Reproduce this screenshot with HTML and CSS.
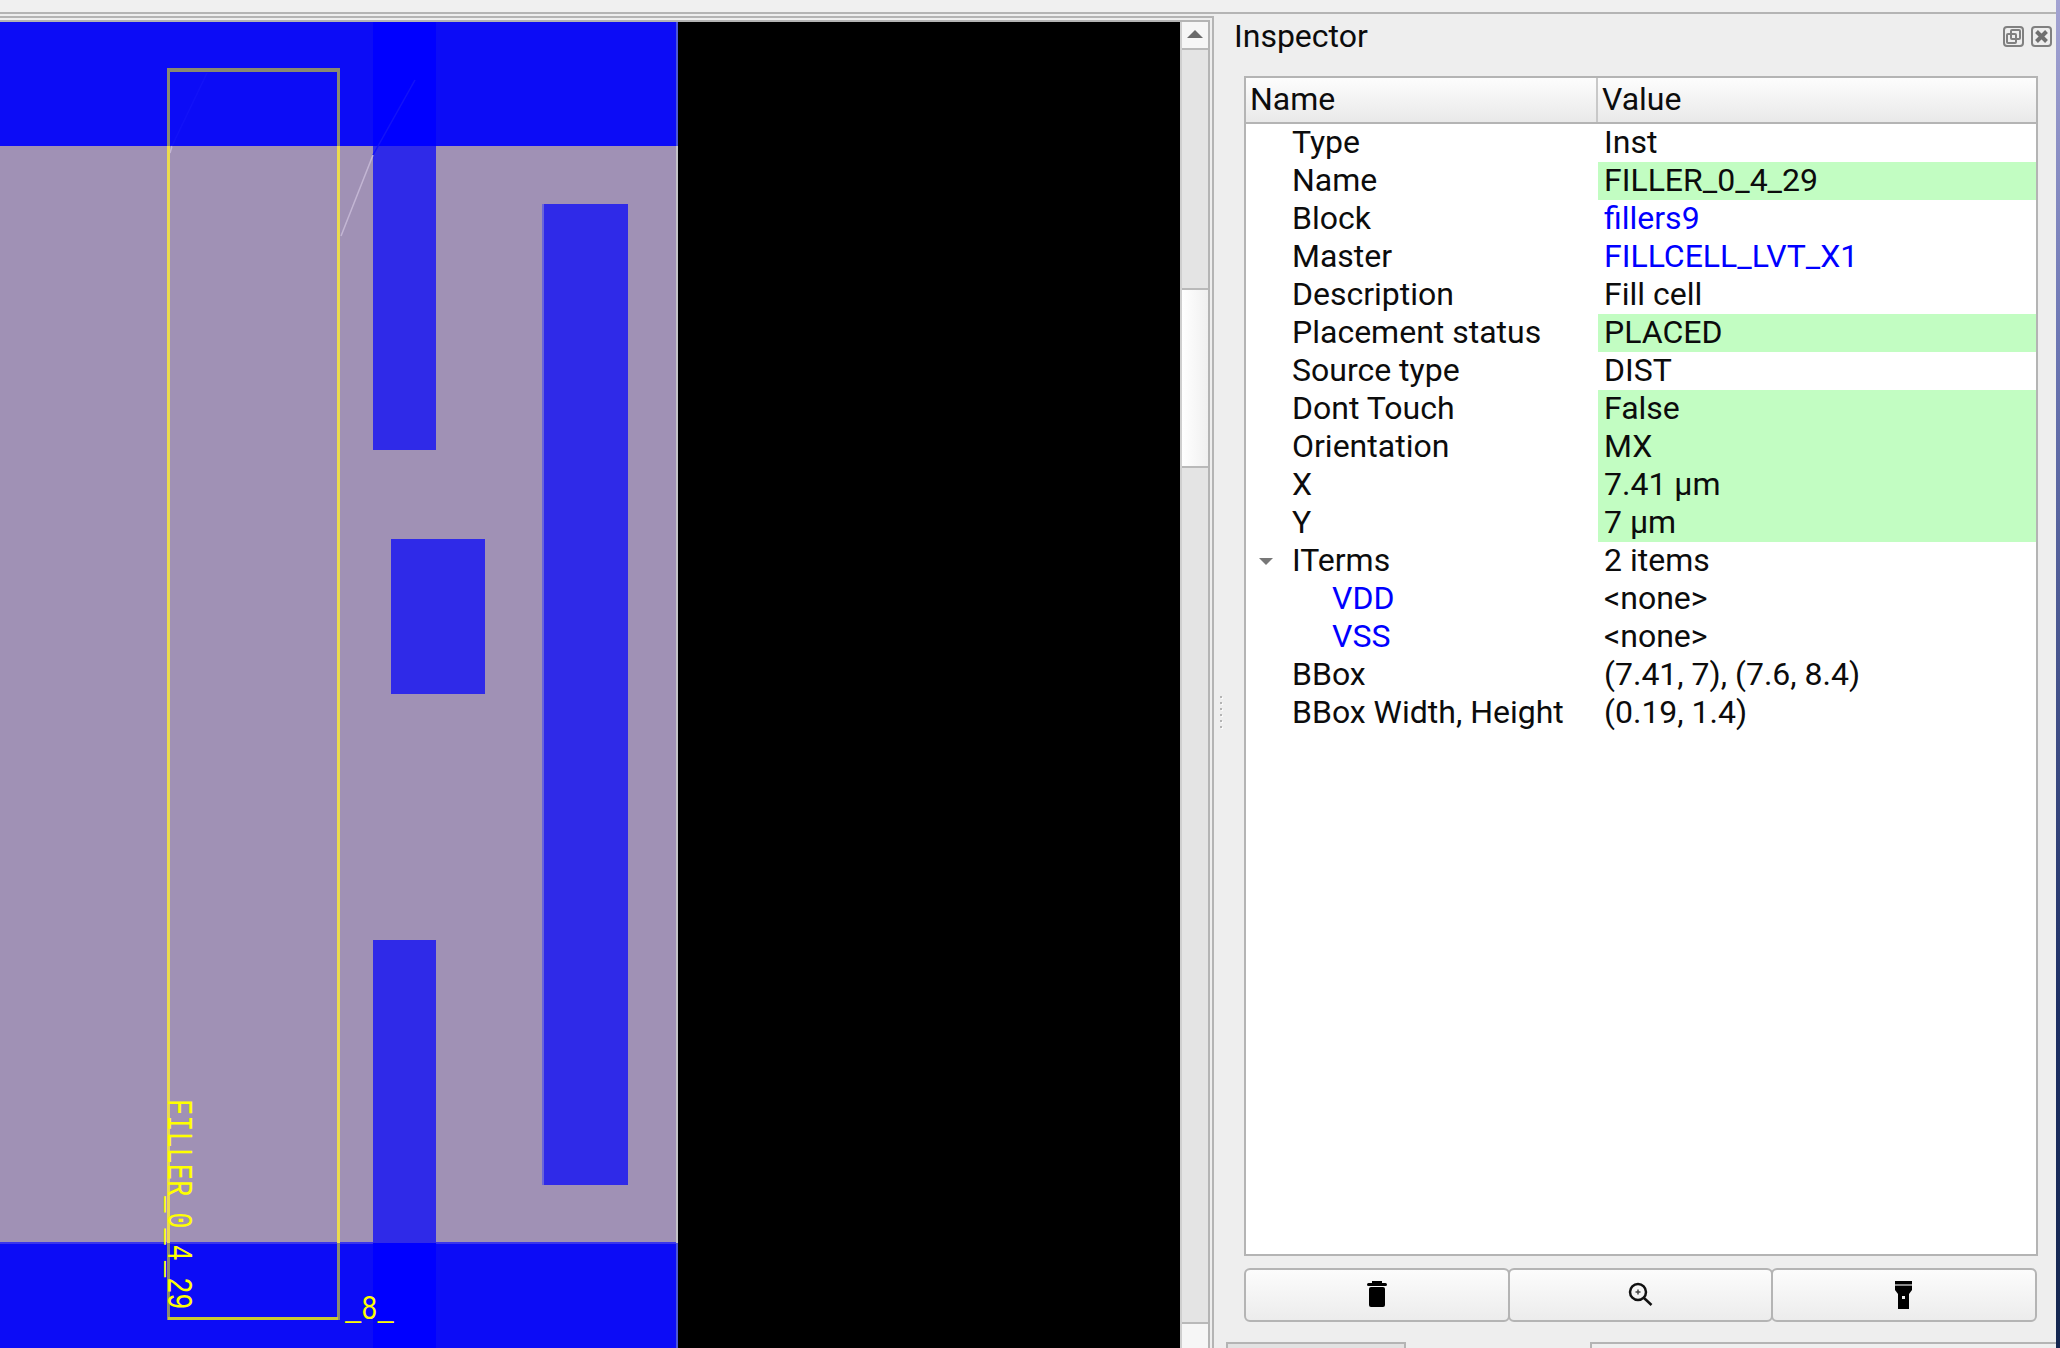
FILE: index.html
```html
<!DOCTYPE html>
<html lang="en">
<head>
    <meta charset="UTF-8">
    <title>Inspector</title>
    <link rel="stylesheet" href="styles.css">
</head>
<body>
    <div class="menu-strip"></div>
    <main class="main">
        <section class="central">
            <div class="view-frame">
                <svg class="layout-view" width="1180" height="1326" viewBox="0 22 1180 1326">
                    <rect class="die" x="0" y="22" width="1180" height="1326"/>
                    <rect class="cell" x="0" y="22" width="676" height="1326"/>
                    <rect class="cell-edge" x="676" y="146" width="2" height="1097"/>
                    <rect class="cell-edge-rail" x="676" y="22" width="2" height="124"/>
                    <rect class="cell-edge-rail" x="676" y="1243" width="2" height="105"/>

                    <rect class="rail" x="0" y="22" width="676" height="124"/>
                    <rect class="rail" x="0" y="1243" width="676" height="105"/>
                    <rect class="rail-seam" x="0" y="1242" width="676" height="2"/>

                    <rect class="pin" x="373" y="146" width="63" height="304"/>
                    <rect class="pin-rail" x="373" y="22" width="63" height="124"/>
                    <rect class="pin" x="373" y="940" width="63" height="303"/>
                    <rect class="pin-rail" x="373" y="1243" width="63" height="105"/>
                    <rect class="pin-edge" x="542" y="204" width="2" height="981"/>
                    <rect class="pin" x="544" y="204" width="84" height="981"/>
                    <rect class="pin" x="391" y="539" width="94" height="155"/>

                    <line class="fly" x1="341" y1="236" x2="373" y2="155"/>
                    <line class="fly-faint" x1="373" y1="155" x2="415" y2="80"/>
                    <line class="fly" x1="170" y1="153" x2="172" y2="146"/>
                    <line class="fly-faint" x1="172" y1="146" x2="207" y2="73"/>

                    <rect class="box-side" x="167" y="146" width="3" height="1097"/>
                    <rect class="box-side" x="337" y="146" width="3" height="1097"/>
                    <rect class="box-dim" x="167" y="70" width="3" height="76"/>
                    <rect class="box-dim" x="337" y="70" width="3" height="76"/>
                    <rect class="box-dim" x="167" y="1243" width="3" height="77"/>
                    <rect class="box-dim" x="337" y="1243" width="3" height="77"/>
                    <rect class="box-dim" x="167" y="68" width="173" height="4"/>
                    <rect class="box-bottom" x="168" y="1317" width="170" height="3"/>

                    <text class="cell-label" transform="translate(168 1099) rotate(90) scale(1 1.400)">FILLER_0_4_29</text>
                    <text class="cell-label" transform="translate(345 1319) scale(1 1.300)">_8_</text>
                </svg>
                <div class="scrollbar">
                    <div class="scroll-btn"><span class="arrow-up"></span></div>
                    <div class="scroll-trough upper"></div>
                    <div class="scroll-thumb"></div>
                    <div class="scroll-trough"></div>
                    <div class="scroll-btn end"></div>
                </div>
            </div>
        </section>

        <div class="splitter">
            <div class="grip">
                <i></i><i></i><i></i><i></i><i></i><i></i>
            </div>
        </div>

        <aside class="dock">
            <div class="dock-title">
                <span>Inspector</span>
                <div class="dock-buttons">
                    <svg width="21" height="21" viewBox="0 0 21 21">
                        <rect class="dock-icon" x="1" y="1" width="19" height="19" rx="3"/>
                        <rect class="dock-icon" x="8" y="4" width="9" height="9" rx="1"/>
                        <rect class="dock-icon" x="4" y="8" width="9" height="9" rx="1"/>
                    </svg>
                    <svg width="21" height="21" viewBox="0 0 21 21">
                        <rect class="dock-icon" x="1" y="1" width="19" height="19" rx="3"/>
                        <path class="dock-x" d="M5.500 5.500 15.500 15.500M15.500 5.500 5.500 15.500"/>
                    </svg>
                </div>
            </div>

            <div class="tree">
                <div class="tree-head">
                    <div class="head-cell">Name</div>
                    <div class="head-cell">Value</div>
                </div>
                <div class="row"><div class="name">Type</div><div class="value">Inst</div></div>
                <div class="row"><div class="name">Name</div><div class="value edit">FILLER_0_4_29</div></div>
                <div class="row"><div class="name">Block</div><div class="value link">fillers9</div></div>
                <div class="row"><div class="name">Master</div><div class="value link">FILLCELL_LVT_X1</div></div>
                <div class="row"><div class="name">Description</div><div class="value">Fill cell</div></div>
                <div class="row"><div class="name">Placement status</div><div class="value edit">PLACED</div></div>
                <div class="row"><div class="name">Source type</div><div class="value">DIST</div></div>
                <div class="row"><div class="name">Dont Touch</div><div class="value edit">False</div></div>
                <div class="row"><div class="name">Orientation</div><div class="value edit">MX</div></div>
                <div class="row"><div class="name">X</div><div class="value edit">7.41 μm</div></div>
                <div class="row"><div class="name">Y</div><div class="value edit">7 μm</div></div>
                <div class="row"><div class="name"><span class="caret"></span>ITerms</div><div class="value">2 items</div></div>
                <div class="row"><div class="name child link">VDD</div><div class="value">&lt;none&gt;</div></div>
                <div class="row"><div class="name child link">VSS</div><div class="value">&lt;none&gt;</div></div>
                <div class="row"><div class="name">BBox</div><div class="value">(7.41, 7), (7.6, 8.4)</div></div>
                <div class="row"><div class="name">BBox Width, Height</div><div class="value">(0.19, 1.4)</div></div>
            </div>

            <div class="actions">
                <button class="action" type="button" aria-label="Delete">
                    <svg width="22" height="28" viewBox="0 0 22 28">
                        <rect x="6" y="0" width="10" height="2"/>
                        <rect x="1" y="2" width="20" height="3" rx="1.500"/>
                        <rect x="3" y="6" width="16" height="20" rx="2"/>
                    </svg>
                </button>
                <button class="action" type="button" aria-label="Zoom to">
                    <svg width="28" height="28" viewBox="0 0 28 28">
                        <circle class="lens" cx="11" cy="11" r="8"/>
                        <path class="lens" d="M17 17 24.500 24"/>
                        <path class="lens-plus" d="M11 8.500V13.500M8.500 11H13.500"/>
                    </svg>
                </button>
                <button class="action" type="button" aria-label="Highlight">
                    <svg width="18" height="28" viewBox="0 0 18 28">
                        <rect x="0" y="0" width="17" height="3"/>
                        <rect class="torch-band" x="0" y="3" width="17" height="2"/>
                        <rect x="0" y="5" width="17" height="4"/>
                        <path d="M0 9H17L14 13V28H3V13Z"/>
                        <rect class="torch-dot" x="7" y="15" width="3" height="3"/>
                    </svg>
                </button>
            </div>

            <div class="tabs">
                <div class="tab"></div>
                <div class="tab-pane"></div>
            </div>
        </aside>
    </main>
    <div class="desktop-edge"></div>
</body>
</html>
```

FILE: styles.css
```css
/* General */
html, body {
    margin: 0;
    height: 1348px;
    overflow: hidden;
}

body {
    position: relative;
    background: #eeeeee;
    color: #0c0c0c;
    font-family: 'Roboto', 'Liberation Sans', sans-serif;
    font-size: 32px;
}

.menu-strip {
    height: 12px;
    background: #f0f0f0;
}

.main {
    display: flex;
    width: 2056px;
    height: 1334px;
    border-top: 2px solid #b4b4b4;
}

/* Central view, two nested frames */
.central {
    margin-top: 2px;
    padding: 2px 2px 0 0;
    border-top: 2px solid #b4b4b4;
    border-right: 2px solid #b4b4b4;
}

.view-frame {
    display: flex;
    height: 100%;
    border-top: 2px solid #b4b4b4;
    border-right: 2px solid #b4b4b4;
}

.layout-view {
    display: block;
    flex: none;
}

.die { fill: #000; }
.cell { fill: #a091b5; }
.cell-edge { fill: #c2c2c6; }
.cell-edge-rail { fill: #4b55d8; }
.rail { fill: #0c0cf6; }
.rail-seam { fill: #3a35ec; }
.pin { fill: #2f2ae8; }
.pin-rail { fill: #0000ff; }
.pin-edge { fill: #6a66d8; }
.fly { stroke: #c3b6d4; stroke-width: 1.500; }
.fly-faint { stroke: #1212f8; stroke-width: 1.500; }
.box-side { fill: #ecdc4e; }
.box-dim { fill: #8a8a72; }
.box-bottom { fill: #c8c836; }

.cell-label {
    fill: #ffff00;
    font-family: 'Liberation Mono', monospace;
    font-size: 27px;
}

/* Scrollbar */
.scrollbar {
    display: flex;
    flex-direction: column;
    width: 26px;
    border-left: 2px solid #cfcfcf;
}

.scroll-btn {
    display: flex;
    justify-content: center;
    flex: none;
    height: 28px;
    padding-top: 8px;
    box-sizing: border-box;
    background: #f6f6f6;
    border-bottom: 2px solid #b9b9b9;
}

.scroll-btn.end {
    border-top: 2px solid #b9b9b9;
    border-bottom: 0;
}

.arrow-up {
    width: 0;
    height: 0;
    border-left: 8px solid transparent;
    border-right: 8px solid transparent;
    border-bottom: 8px solid #6a6a6a;
}

.scroll-trough {
    flex: 1;
    background: #e4e4e4;
}

.scroll-trough.upper {
    flex: none;
    height: 238px;
}

.scroll-thumb {
    flex: none;
    height: 176px;
    background: linear-gradient(90deg, #ffffff, #f0f0f0);
    border-top: 2px solid #b9b9b9;
    border-bottom: 2px solid #b9b9b9;
}

/* Splitter */
.splitter {
    position: relative;
    width: 0;
}

.grip {
    position: absolute;
    left: 6px;
    top: 682px;
    display: flex;
    flex-direction: column;
    gap: 4px;
}

.grip i {
    display: block;
    width: 2px;
    height: 2px;
    background: #b4b4b4;
    box-shadow: 1px 1px 0 #fafafa;
}

/* Inspector dock */
.dock {
    flex: 1;
    display: flex;
    flex-direction: column;
    min-width: 0;
    padding-left: 30px;
    padding-right: 18px;
}

.dock-title {
    display: flex;
    flex: none;
    justify-content: space-between;
    height: 62px;
    margin-left: -10px;
    line-height: 44px;
}

.dock-buttons {
    display: flex;
    gap: 7px;
    margin-top: 12px;
    margin-right: -14px;
}

.dock-icon {
    fill: none;
    stroke: #808080;
    stroke-width: 2;
}

.dock-x {
    fill: none;
    stroke: #707070;
    stroke-width: 4;
}

/* Property tree */
.tree {
    height: 1180px;
    box-sizing: border-box;
    flex: none;
    background: #fff;
    border: 2px solid #b4b4b4;
}

.tree-head {
    display: grid;
    grid-template-columns: 352px 1fr;
    height: 46px;
    box-sizing: border-box;
    background: linear-gradient(#fdfdfd, #e9e9e9);
    border-bottom: 2px solid #b4b4b4;
}

.head-cell {
    padding-left: 4px;
    line-height: 43px;
}

.head-cell:first-child {
    border-right: 2px solid #c8c8c8;
}

.row {
    display: grid;
    grid-template-columns: 352px 1fr;
    height: 38px;
    line-height: 36px;
}

.name {
    position: relative;
    padding-left: 46px;
    white-space: nowrap;
}

.name.child {
    padding-left: 86px;
}

.value {
    padding-left: 6px;
    white-space: nowrap;
}

.value.edit {
    background: #c2fdc2;
}

.link {
    color: #0000ff;
}

.caret {
    position: absolute;
    left: 13px;
    top: 16px;
    width: 0;
    height: 0;
    border-left: 7px solid transparent;
    border-right: 7px solid transparent;
    border-top: 7px solid #777;
}

/* Buttons under the tree */
.actions {
    display: flex;
    flex: none;
    width: 793px;
    margin-top: 12px;
}

.action {
    flex: 1;
    display: flex;
    align-items: center;
    justify-content: center;
    height: 54px;
    padding: 0;
    background: linear-gradient(#fcfcfc, #ececec);
    border: 2px solid #b4b4b4;
    border-radius: 6px;
}

.action + .action {
    margin-left: -2px;
}

.lens {
    fill: none;
    stroke: #111;
    stroke-width: 2.500;
}

.lens-plus {
    fill: none;
    stroke: #444;
    stroke-width: 1.500;
}

.torch-band { fill: #8a8a8a; }
.torch-dot { fill: #eee; }

/* Clipped tab bar at the bottom */
.tabs {
    display: flex;
    justify-content: space-between;
    flex: none;
    height: 30px;
    margin-top: 20px;
    margin-left: -18px;
    margin-right: -18px;
}

.tab {
    width: 176px;
    background: #e2e2e2;
    border: 2px solid #b4b4b4;
}

.tab-pane {
    width: 464px;
    background: #efefef;
    border-top: 2px solid #b4b4b4;
    border-left: 2px solid #b4b4b4;
}

/* Sliver of the desktop behind the window */
.desktop-edge {
    position: absolute;
    top: 0;
    right: 0;
    width: 4px;
    height: 100%;
    background: linear-gradient(#a3a3d2, #6d77b4 25%, #1d2f64 75%, #14264f);
}
```
